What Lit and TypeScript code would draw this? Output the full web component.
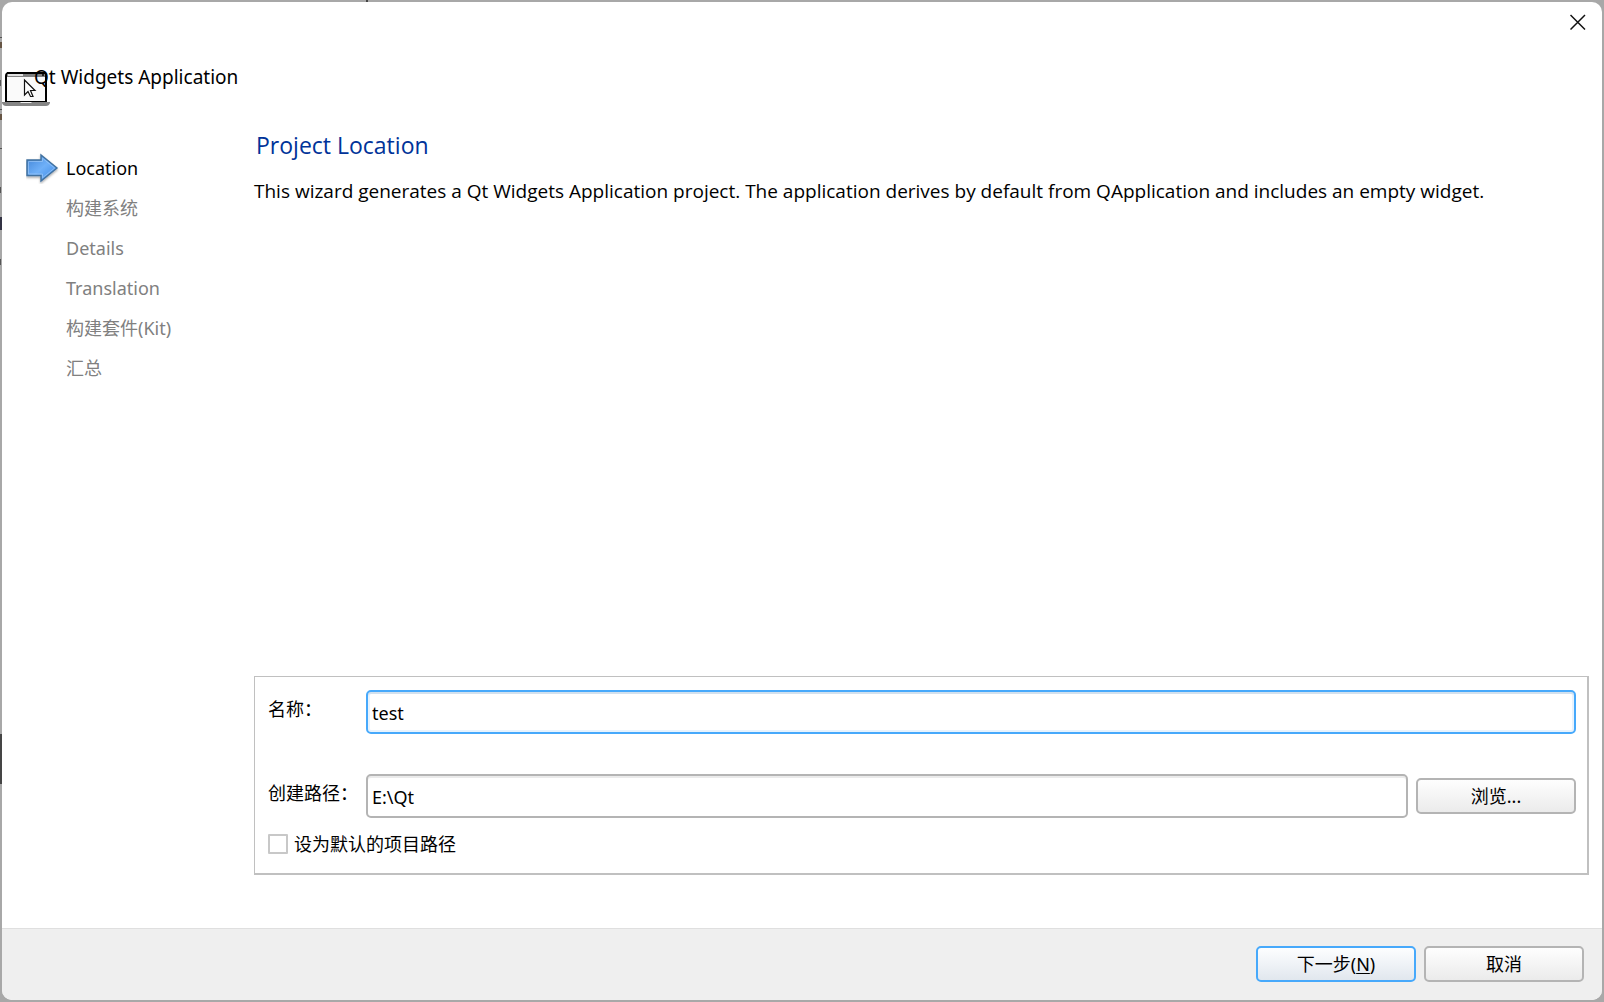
import { LitElement, html, svg, css } from "lit";
import { customElement, property, state } from "lit/decorators.js";

const STEPS = ["Location", "构建系统", "Details", "Translation", "构建套件(Kit)", "汇总"];

const closeIcon = svg`
  <svg width="16" height="16" viewBox="0 0 16 16" aria-hidden="true">
    <path d="M0.5 1L15 15.500M15 1L0.5 15.500" stroke="#111" stroke-width="1.5" fill="none"/>
  </svg>`;

const laptopIcon = svg`
  <svg width="48" height="36" viewBox="0 0 48 36" aria-hidden="true">
    <path d="M4 31V5Q4 2 7 2H41Q44 2 44 5V31Z" fill="#fafafa" stroke="#000" stroke-width="2"/>
    <path d="M5 2H43" stroke="#000" stroke-width="2"/>
    <rect x="5" y="3" width="38" height="3" fill="#808080"/>
    <rect x="6" y="3" width="15" height="2" fill="#e0e0e0"/>
    <rect x="40" y="3" width="2" height="2" fill="#222"/>
    <path d="M0 31H48V32Q47 35 44 35H4Q1 35 0 32Z" fill="#858585"/>
    <path d="M18 31H30L29 32H19Z" fill="#eee"/>
    <path d="M22.500 9V24L26 20.500L28.500 25.500H31L28.500 19.500H33Z" fill="#fff" stroke="#111" stroke-width="1.2"/>
  </svg>`;

const arrowIcon = svg`
  <svg width="34" height="32" viewBox="0 0 34 32" aria-hidden="true">
    <defs>
      <linearGradient id="fill" x1="0" y1="0" x2="1" y2="1">
        <stop offset="0" stop-color="#3f83d6"/>
        <stop offset="0.5" stop-color="#6fb0f8"/>
        <stop offset="1" stop-color="#3a86e4"/>
      </linearGradient>
      <filter id="shade" x="-20%" y="-20%" width="140%" height="150%">
        <feDropShadow dx="0" dy="1.5" stdDeviation="1" flood-color="#000" flood-opacity="0.35"/>
      </filter>
    </defs>
    <path filter="url(#shade)" d="M1 8H15V3L31 16L15 29V23.500H1Z" fill="url(#fill)" stroke="#41719f" stroke-width="1.4"/>
    <path d="M2.500 9.500H16.500V6.200L28.600 16L16.500 25.800V22H2.500Z" fill="none" stroke="#a5cdf8" stroke-opacity="0.6"/>
  </svg>`;

@customElement("wizard-steps")
export class WizardSteps extends LitElement {
  @property({ type: Array }) steps: string[] = [];
  @property({ type: Number }) current = 0;

  static styles = css`
    :host { display: block; }
    .list { list-style: none; margin: 0; padding: 0; }
    .step { display: grid; grid-template-columns: 34px 1fr; column-gap: 6px; align-items: center; height: 40px; color: #808080; }
    .active { color: #000; }
    .mark { display: flex; }
  `;

  render() {
    return html`<ol class="list">
      ${this.steps.map((name, i) => html`
        <li class="step ${i === this.current ? "active" : ""}">
          <span class="mark">${i === this.current ? arrowIcon : ""}</span>
          <span>${name}</span>
        </li>`)}
    </ol>`;
  }
}

@customElement("app-root")
export class AppRoot extends LitElement {
  @state() private name = "test";
  @state() private path = "E:\\Qt";

  static styles = css`
    :host {
      display: block;
      font-family: "Noto Sans", "Noto Sans CJK SC", sans-serif;
      font-size: 18px;
      line-height: 24px;
      color: #000;
    }
    * { box-sizing: border-box; }
    .frame {
      min-height: 100vh;
      padding: 2px;
      display: flex;
      background:
        linear-gradient(#454545, #454545) 0 734px / 2px 50px no-repeat,
        linear-gradient(#454545, #454545) 366px 0 / 2px 2px no-repeat,
        linear-gradient(#555, #555) 0 37px / 2px 1px no-repeat,
        linear-gradient(#654, #654) 0 42px / 2px 6px no-repeat,
        linear-gradient(#555, #555) 0 80px / 1px 6px no-repeat,
        linear-gradient(#555, #555) 0 109px / 2px 1px no-repeat,
        linear-gradient(#654, #654) 0 114px / 2px 6px no-repeat,
        linear-gradient(#555, #555) 0 148px / 2px 1px no-repeat,
        linear-gradient(#555, #555) 0 187px / 1px 6px no-repeat,
        linear-gradient(#334, #334) 0 217px / 2px 13px no-repeat,
        linear-gradient(#555, #555) 0 259px / 1px 6px no-repeat,
        #a8a8a8;
    }
    .dialog {
      flex: 1;
      display: flex;
      flex-direction: column;
      background: #fff;
      border-radius: 10px;
      overflow: hidden;
    }
    .titlebar { display: flex; justify-content: flex-end; height: 44px; padding: 4px 8px; }
    .close { display: grid; place-items: center; width: 32px; height: 32px; padding: 0; border: 0; background: none; }
    .header { position: relative; height: 80px; padding: 19px 0 0 32px; }
    .title { margin: 0; font: inherit; font-size: 19px; position: relative; }
    .logo { position: absolute; left: 0; top: 25px; display: flex; }
    .body { flex: 1; display: grid; grid-template-columns: 206px 1fr; column-gap: 22px; padding: 0 13px 53px 24px; }
    .steps { padding-top: 22px; }
    .page { display: flex; flex-direction: column; }
    .heading { margin: 0; padding: 3px 2px 0; font-family: "Open Sans", sans-serif; font-size: 23px; line-height: 32px; font-weight: 400; color: #003399; }
    .intro { margin: 18px 0 0; font-family: "Open Sans", sans-serif; font-size: 19px; }
    .group {
      margin-top: auto;
      border: 1px solid #c0c0c0;
      border-width: 1px 2px 2px 1px;
      padding: 13px 11px 17px 13px;
      display: grid;
      grid-template-columns: 90px 1fr 160px;
      column-gap: 8px;
      align-items: center;
    }
    .label { padding-bottom: 6px; white-space: nowrap; }
    .field {
      width: 100%;
      min-width: 0;
      height: 44px;
      padding: 2px 4px 0;
      border: 2px solid #b4b4b4;
      border-radius: 5px;
      font: inherit;
      color: inherit;
      background: #fff;
      box-shadow: inset 0 2px 0 #ebebeb;
      outline: none;
    }
    .wide { grid-column: 2 / -1; }
    .focused { border-color: #47a9fb; box-shadow: inset 0 2px 0 #d3e1ee, inset 0 0 0 2px #e8f3fd; }
    .gap { grid-column: 1 / -1; height: 40px; }
    .default { grid-column: 1 / -1; display: flex; align-items: center; gap: 6px; padding-top: 14px; }
    .tick { appearance: none; width: 20px; height: 20px; margin: 0; border: 2px solid #c8c8c8; border-radius: 1px; background: #fff; }
    .button {
      width: 160px;
      height: 36px;
      padding: 0;
      border: 2px solid #b4b4b4;
      border-radius: 5px;
      background: linear-gradient(#fefefe, #ebebeb);
      font: inherit;
      color: inherit;
    }
    .primary { border-color: #47a9fb; background: linear-gradient(#fdfeff, #e1e7ee); }
    .footer { display: flex; justify-content: flex-end; gap: 8px; padding: 17px 18px 18px; border-top: 1px solid #dfdfdf; background: #efefef; }
    .key { text-underline-offset: 2px; }
  `;

  render() {
    return html`
      <div class="frame">
        <main class="dialog">
          <div class="titlebar"><button class="close" aria-label="Close">${closeIcon}</button></div>
          <header class="header">
            <span class="logo">${laptopIcon}</span>
            <h1 class="title">Qt Widgets Application</h1>
          </header>
          <div class="body">
            <wizard-steps class="steps" .steps=${STEPS} .current=${0}></wizard-steps>
            <section class="page">
              <h2 class="heading">Project Location</h2>
              <p class="intro">This wizard generates a Qt Widgets Application project. The application derives by default from QApplication and includes an empty widget.</p>
              <form class="group">
                <label class="label" for="name">名称：</label>
                <input class="field wide focused" id="name" type="text" .value=${this.name}
                  @input=${(e: Event) => (this.name = (e.target as HTMLInputElement).value)} />
                <div class="gap"></div>
                <label class="label" for="path">创建路径：</label>
                <input class="field" id="path" type="text" .value=${this.path}
                  @input=${(e: Event) => (this.path = (e.target as HTMLInputElement).value)} />
                <button class="button" type="button">浏览...</button>
                <div class="default">
                  <input class="tick" id="default" type="checkbox" />
                  <label for="default">设为默认的项目路径</label>
                </div>
              </form>
            </section>
          </div>
          <footer class="footer">
            <button class="button primary">下一步(<u class="key">N</u>)</button>
            <button class="button">取消</button>
          </footer>
        </main>
      </div>`;
  }
}
